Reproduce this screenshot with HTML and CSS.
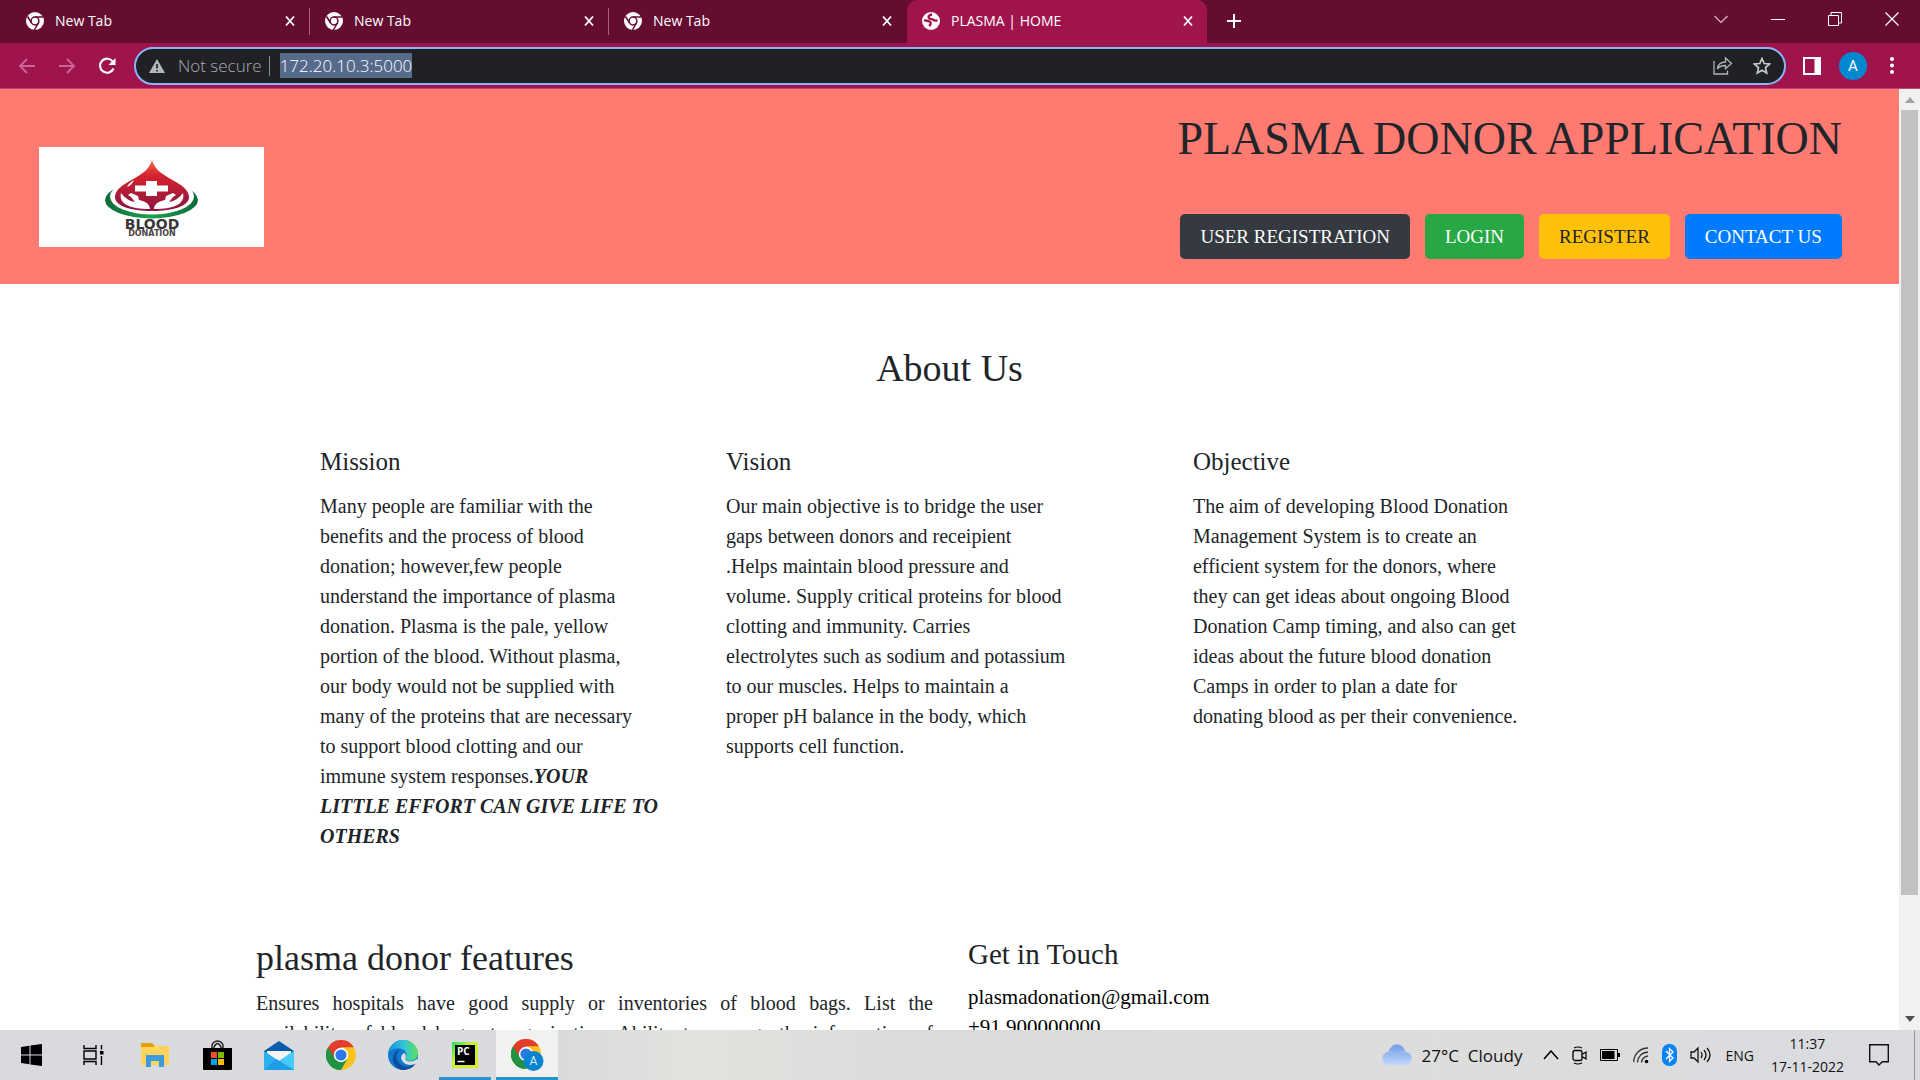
FILE: index.html
```html
<!DOCTYPE html>
<html lang="en">
<head>
<meta charset="utf-8">
<title>PLASMA | HOME</title>
<link rel="stylesheet" href="styles.css">
</head>
<body>
<svg class="defs" width="0" height="0" aria-hidden="true">
  <defs>
    <linearGradient id="drop" x1="0" y1="0" x2="0" y2="1"><stop offset="0" stop-color="#f26a4b"/><stop offset=".3" stop-color="#d6232f"/><stop offset="1" stop-color="#8a1440"/></linearGradient>
    <linearGradient id="green" x1="0" y1="0" x2="1" y2="0"><stop offset="0" stop-color="#0c6b3a"/><stop offset=".5" stop-color="#1da04c"/><stop offset="1" stop-color="#0c6b3a"/></linearGradient>
    <linearGradient id="cloud" x1="0" y1="0" x2="0" y2="1"><stop offset="0" stop-color="#6f9be8"/><stop offset="1" stop-color="#c3d8fb"/></linearGradient>
    <linearGradient id="edge-top" x1="0" y1="0" x2="1" y2="0"><stop offset="0" stop-color="#1b8fdc"/><stop offset=".5" stop-color="#2fc3dc"/><stop offset="1" stop-color="#5fe05c"/></linearGradient>
    <linearGradient id="pc" x1="0" y1="0" x2="1" y2="1"><stop offset="0" stop-color="#21e05a"/><stop offset=".4" stop-color="#c8f03a"/><stop offset="1" stop-color="#e0e82a"/></linearGradient>
    <symbol id="chrome-mono" viewBox="0 0 18 18">
      <circle cx="9" cy="9" r="9" fill="#fff"/>
      <circle cx="9" cy="9" r="3.9" fill="none" stroke="#640d31" stroke-width="1.5"/>
      <path d="M9 5h8M5.600 11L1.500 4.500M12.400 11L8.400 18" stroke="#640d31" stroke-width="1.500" fill="none"/>
    </symbol>
    <symbol id="chrome" viewBox="0 0 30 30">
      <circle cx="15" cy="15" r="15" fill="#fcc31e"/>
      <path d="M15 15L2 7.500A15 15 0 0 1 28 7.500H15z" fill="#e33b2e"/>
      <path d="M2 7.500A15 15 0 0 0 15 30l6.500-11.200L15 15z" fill="#229342"/>
      <path d="M15 7.500h13l-6.500 11.200z" fill="#fcc31e"/>
      <path d="M15 7.500a7.500 7.500 0 0 0-6.500 11.200L2 7.500z" fill="#e33b2e"/>
      <path d="M2 7.500l6.500 11.200L15 22v8A15 15 0 0 1 2 7.500z" fill="#229342"/>
      <circle cx="15" cy="15" r="7.200" fill="#fff"/><circle cx="15" cy="15" r="5.600" fill="#2f78ea"/>
    </symbol>
    <symbol id="x" viewBox="0 0 12 12"><path d="M2 1.500l8 9M10 1.500l-8 9" stroke="#fff" stroke-width="1.800"/></symbol>
  </defs>
</svg>

<div class="window">
  <div class="tabstrip">
    <div class="tab"><svg width="18" height="18"><use href="#chrome-mono"/></svg><span>New Tab</span><button aria-label="Close tab"><svg width="12" height="12"><use href="#x"/></svg></button></div>
    <div class="tab"><svg width="18" height="18"><use href="#chrome-mono"/></svg><span>New Tab</span><button aria-label="Close tab"><svg width="12" height="12"><use href="#x"/></svg></button></div>
    <div class="tab last"><svg width="18" height="18"><use href="#chrome-mono"/></svg><span>New Tab</span><button aria-label="Close tab"><svg width="12" height="12"><use href="#x"/></svg></button></div>
    <div class="tab active"><svg width="18" height="18" viewBox="0 0 18 18"><circle cx="9" cy="9" r="9" fill="#fff"/><path d="M10 2.500C7 3 5.500 5 7.500 6.500c1.500 1 3 0 4 1.500 1 .8 2.500.5 4 .5M2 8c2 1 4 .5 5.500 1.500 2 1.500 1.500 3-.5 4.500" fill="none" stroke="#a0144e" stroke-width="2.300"/></svg><span>PLASMA | HOME</span><button aria-label="Close tab"><svg width="12" height="12"><use href="#x"/></svg></button></div>
    <button class="new-tab" aria-label="New tab"><svg width="16" height="16" viewBox="0 0 16 16"><path d="M8 1v14M1 8h14" stroke="#fff" stroke-width="2"/></svg></button>
    <div class="controls">
      <button aria-label="Search tabs"><svg width="14" height="14" viewBox="0 0 14 14"><path d="M.5 4L7 10.500 13.500 4" fill="none" stroke="#d9b9c8" stroke-width="1.200"/></svg></button>
      <button aria-label="Minimize"><svg width="14" height="14" viewBox="0 0 14 14"><path d="M0 7.500h14" stroke="#fff"/></svg></button>
      <button aria-label="Restore"><svg width="14" height="14" viewBox="0 0 14 14"><path d="M.5 3.500h10v10H.5zM3 3V.500h10.500v10.500H11" fill="none" stroke="#fff"/></svg></button>
      <button aria-label="Close"><svg width="14" height="14" viewBox="0 0 14 14"><path d="M.5.500l13 13M13.500.500l-13 13" stroke="#fff" stroke-width="1.200"/></svg></button>
    </div>
  </div>

  <div class="toolbar">
    <button class="nav" aria-label="Back"><svg width="18" height="18" viewBox="0 0 18 18"><path d="M17 9H2M9 2L2 9l7 7" fill="none" stroke="#c8669a" stroke-width="1.800"/></svg></button>
    <button class="nav" aria-label="Forward"><svg width="18" height="18" viewBox="0 0 18 18"><path d="M1 9h15M9 2l7 7-7 7" fill="none" stroke="#c8669a" stroke-width="1.800"/></svg></button>
    <button class="nav" aria-label="Reload"><svg width="18" height="18" viewBox="0 0 18 18"><path d="M15.500 11.500A7 7 0 1 1 15 5" fill="none" stroke="#fff" stroke-width="2.200"/><path d="M17.500 1v7H10.500z" fill="#fff"/></svg></button>
    <div class="omnibox">
      <svg width="16" height="14" viewBox="0 0 16 14"><path d="M8 0l8 14H0z" fill="#b5b8bb"/><path d="M8 5v4.500M8 11v1.500" stroke="#202124" stroke-width="1.600"/></svg>
      <span class="insecure">Not secure</span>
      <span class="bar"></span>
      <span class="url">172.20.10.3:5000</span>
      <span class="omni-icons">
        <svg width="20" height="19" viewBox="0 0 20 19"><path d="M1 5v13h13.500v-3.500M4.500 13c.5-5 3-7 8-7V2l6 5.500-6 5V9.500c-4 0-6.500 1-8 3.500z" fill="none" stroke="#b0b3b6" stroke-width="1.300"/></svg>
        <svg width="18" height="18" viewBox="0 0 18 18"><path d="M9 1.500l2.200 5 5.400.5-4.100 3.600 1.200 5.400L9 13.200 4.300 16l1.200-5.400L1.400 7l5.400-.5z" fill="none" stroke="#c6c9cb" stroke-width="1.700"/></svg>
      </span>
    </div>
    <svg class="panel" width="18" height="18" viewBox="0 0 18 18"><path d="M1 1h16v16H1z" fill="none" stroke="#fff" stroke-width="2"/><path d="M11.500 1H17v16h-5.500z" fill="#fff"/></svg>
    <span class="avatar">A</span>
    <svg class="dots" width="4" height="17" viewBox="0 0 4 17"><g fill="#fff"><circle cx="2" cy="2" r="2"/><circle cx="2" cy="8.500" r="2"/><circle cx="2" cy="15" r="2"/></g></svg>
  </div>

  <div class="viewport">
    <div class="page">
      <header class="site-header">
        <svg class="logo" width="225" height="100" viewBox="0 0 225 100">
          <path fill="#fff" d="M0 0h225v100H0z"/>
          <ellipse cx="112.500" cy="53" rx="46.500" ry="18.500" fill="url(#green)"/>
          <ellipse cx="113" cy="49.500" rx="42" ry="18" fill="#fff"/>
          <path d="M113 13c3 11 12 15 24 22 9 5 13 10 13 15 0 9-16 14-37 14s-37-5-37-14c0-5 4-10 13-15 12-7 21-11 24-22z" fill="url(#drop)"/>
          <path d="M107 34h11v4.500h11v6h-11V49h-11v-4.500H96v-6h11z" fill="#fff"/>
          <path d="M95 33c-4 2-6 5-7 7 3-1 6-4 7-7z" fill="#fff"/>
          <path d="M82 46c4 5 8 8 14 9l-4-5-3-2 3-2 7 3 1 4c6 1 11 4 11 9-10 0-19-1-25-5-4-3-5-7-4-11z" fill="#fff"/>
          <path d="M144 46c-4 5-8 8-14 9l4-5 3-2-3-2-7 3-1 4c-6 1-11 4-11 9 10 0 19-1 25-5 4-3 5-7 4-11z" fill="#fff"/>
          <text x="113" y="82" text-anchor="middle" class="logo-a">BLOOD</text>
          <text x="113" y="89" text-anchor="middle" class="logo-b">DONATION</text>
        </svg>
        <div class="head-right">
          <h1>PLASMA DONOR APPLICATION</h1>
          <nav>
            <a class="btn dark" href="#">USER REGISTRATION</a>
            <a class="btn green" href="#">LOGIN</a>
            <a class="btn yellow" href="#">REGISTER</a>
            <a class="btn blue" href="#">CONTACT US</a>
          </nav>
        </div>
      </header>

      <h2 class="about-title">About Us</h2>
      <section class="about">
        <article>
          <h3>Mission</h3>
          <p>Many people are familiar with the<br>benefits and the process of blood<br>donation; however,few people<br>understand the importance of plasma<br>donation. Plasma is the pale, yellow<br>portion of the blood. Without plasma,<br>our body would not be supplied with<br>many of the proteins that are necessary<br>to support blood clotting and our<br>immune system responses.<b><i>YOUR<br>LITTLE EFFORT CAN GIVE LIFE TO<br>OTHERS</i></b></p>
        </article>
        <article>
          <h3>Vision</h3>
          <p>Our main objective is to bridge the user<br>gaps between donors and receipient<br>.Helps maintain blood pressure and<br>volume. Supply critical proteins for blood<br>clotting and immunity. Carries<br>electrolytes such as sodium and potassium<br>to our muscles. Helps to maintain a<br>proper pH balance in the body, which<br>supports cell function.</p>
        </article>
        <article>
          <h3>Objective</h3>
          <p>The aim of developing Blood Donation<br>Management System is to create an<br>efficient system for the donors, where<br>they can get ideas about ongoing Blood<br>Donation Camp timing, and also can get<br>ideas about the future blood donation<br>Camps in order to plan a date for<br>donating blood as per their convenience.</p>
        </article>
      </section>

      <section class="bottom">
        <div class="features">
          <h2>plasma donor features</h2>
          <p>Ensures hospitals have good supply or inventories of blood bags. List the<br>availability of blood bags at organization. Ability to manage the information of</p>
        </div>
        <address class="contact">
          <h2>Get in Touch</h2>
          <a href="mailto:plasmadonation@gmail.com">plasmadonation@gmail.com</a>
          <a href="tel:+91900000000">+91 900000000</a>
        </address>
      </section>
    </div>
    <div class="scrollbar">
      <svg width="10" height="6" viewBox="0 0 10 6"><path d="M0 6l5-6 5 6z" fill="#a3a3a3"/></svg>
      <div class="track"><div class="thumb"></div></div>
      <svg width="10" height="6" viewBox="0 0 10 6"><path d="M0 0l5 6 5-6z" fill="#505050"/></svg>
    </div>
  </div>

  <div class="taskbar">
    <button class="task" aria-label="Start"><svg width="21" height="22" viewBox="0 0 21 22"><path d="M0 3l8.500-1.200v8.700H0zM9.500 1.600L21 0v10.500H9.500zM0 11.500h8.500v8.700L0 19zM9.500 11.500H21V22L9.500 20.400z"/></svg></button>
    <button class="task" aria-label="Task view"><svg width="21" height="20" viewBox="0 0 21 20"><path d="M1 0v3.500h12V0M1 6h12v8H1zM1 20v-3.500h12V20M18.500 0v4.500M18.500 11v9" fill="none" stroke="#000" stroke-width="1.400"/><path d="M17 6h3.500v3.500H17z"/></svg></button>
    <button class="task" aria-label="File Explorer"><svg width="28" height="24" viewBox="0 0 28 24"><path d="M0 0h11l3 3v4H0z" fill="#e5a100"/><path d="M0 4h12l2-1h14v19H0z" fill="#ffd35c"/><path d="M5 24V12h18v12h-5v-6h-8v6z" fill="#3d9bdc"/></svg></button>
    <button class="task" aria-label="Store"><svg width="29" height="30" viewBox="0 0 29 30"><path d="M9 9V6a5.500 5 0 0 1 11 0v3M11 9V7q3.500-7 7 0v2" fill="none" stroke="#222" stroke-width="1.500"/><path d="M0 8h29v21q0 1-1 1H1q-1 0-1-1z"/><path d="M8 12h6v6H8z" fill="#f25022"/><path d="M15 12h6v6h-6z" fill="#7fba00"/><path d="M8 19h6v6H8z" fill="#00a4ef"/><path d="M15 19h6v6h-6z" fill="#ffb900"/></svg></button>
    <button class="task" aria-label="Mail"><svg width="30" height="29" viewBox="0 0 30 29"><path d="M0 10L15 0l15 10v7H0z" fill="#0a5cad"/><path d="M3 10h24v8l-12 3-12-3z" fill="#f5f5f5"/><path d="M0 10l15 10 15-10v19H0z" fill="#2bb1ee"/><path d="M12 18l3 2 15-10v19z" fill="#46cbf8"/><path d="M0 29h30L12 18z" fill="#1f9de6"/></svg></button>
    <button class="task" aria-label="Chrome"><svg width="30" height="30"><use href="#chrome"/></svg></button>
    <button class="task" aria-label="Edge"><svg width="30" height="30" viewBox="0 0 30 30"><circle cx="15" cy="15" r="15" fill="#1278cf"/><path d="M0 14C1 5 8 0 15 0c9 0 15 6.500 15 13 0 5-4 8-8 8-3.500 0-5-1.500-4.500-3 2-3 1-9-5.500-9.500C6 8 1 10 0 14z" fill="url(#edge-top)"/><path d="M12 9c-4 4-5 10-1 14 4 4 11 5 17 0-3 5-8 7-13 7C8 29 5 24 5 19c0-5 3-9 7-10z" fill="#0d4f9b"/><path d="M17.500 18c-.5 2 1 3.500 4.500 3.500 2.500 0 5-.8 6.500-2.500l1.500 2-2 2.500c-6 3-12 1-14-3-2-3.500 0-6.500 2.500-7.500 1.500 1.500 1.500 4 1 5z" fill="#dcdee0"/></svg></button>
    <button class="task open" aria-label="PyCharm"><svg width="26" height="26" viewBox="0 0 26 26"><path d="M0 0h26v26H0z" fill="url(#pc)"/><path d="M3 3h20v20H3z"/><text x="5" y="13" class="pc-text">PC</text><path d="M5.500 19.500h7" stroke="#fff" stroke-width="1.500"/></svg></button>
    <button class="task open current" aria-label="Chrome profile A"><svg width="33" height="32" viewBox="0 0 33 32"><use href="#chrome" width="30" height="30"/><circle cx="22.500" cy="22" r="10" fill="#0a84d0"/><text x="22.500" y="26" text-anchor="middle" class="badge-text">A</text></svg></button>

    <div class="tray">
      <svg width="30" height="22" viewBox="0 0 30 22"><path d="M7 21a6.500 6.500 0 0 1-.5-13C8 3 11 .500 15 .500S22 3 23.500 8A6.500 6.500 0 0 1 23 21z" fill="url(#cloud)"/><path d="M6.500 8c3 0 5 1.500 6 3.500M23.500 8c-3-.5-6 1-7 3" fill="none" stroke="#a9c4f5"/></svg>
      <span class="weather">27°C&nbsp; Cloudy</span>
      <svg class="chev" width="16" height="10" viewBox="0 0 16 10"><path d="M1 9l7-8 7 8" fill="none" stroke="#000" stroke-width="1.500"/></svg>
      <svg width="15" height="19" viewBox="0 0 15 19"><rect x="1" y="4.500" width="9" height="10" rx="2" fill="none" stroke="#000" stroke-width="1.300"/><path d="M10 8.500l4-2.500v7l-4-2.500M2 2q4-2 8 0M2 17q4 2 8 0" fill="none" stroke="#000" stroke-width="1.200"/></svg>
      <svg width="20" height="12" viewBox="0 0 20 12"><path d="M.5.500h17v11H.5z" fill="none" stroke="#000"/><path d="M2 2h12.500v8H2zM18 4h2v4h-2z"/></svg>
      <svg width="16" height="17" viewBox="0 0 16 17"><path d="M.7 15C1 7 7 1 15 1M4.500 15.500C5 9.500 9 5.500 15 5M8.500 15.500C9 12 11 9.500 15 9" fill="none" stroke="#333" stroke-width="1.300"/><circle cx="13.500" cy="14.500" r="1.800"/></svg>
      <svg width="15" height="22" viewBox="0 0 15 22"><rect width="15" height="22" rx="7" fill="#0a84f5"/><path d="M4 7l7 7-3.500 3.500v-13L11 8l-7 7" fill="none" stroke="#fff" stroke-width="1.300"/></svg>
      <svg width="22" height="18" viewBox="0 0 22 18"><path d="M1 6h3l4-4v14l-4-4H1zM11 6q2 3 0 6M14 4q4 5 0 10M17 2q6 7 0 14" fill="none" stroke="#111" stroke-width="1.300"/></svg>
      <span class="lang">ENG</span>
      <span class="clock">11:37<br>17-11-2022</span>
      <svg class="note" width="20" height="22" viewBox="0 0 20 22"><path d="M.7.700h18.600v17h-6L10 21l-3-3.300H.7z" fill="none" stroke="#111" stroke-width="1.400"/></svg>
      <span class="peek"></span>
    </div>
  </div>
</div>
</body>
</html>
```
FILE: styles.css
```css
* { box-sizing: border-box; }
body { margin: 0; }
.defs { position: absolute; }
button { border: 0; padding: 0; background: none; font: inherit; display: flex; align-items: center; justify-content: center; }
h1, h2, h3, p { margin: 0; font-weight: 400; }

.window { height: 100vh; display: flex; flex-direction: column; overflow: hidden; font-family: "Open Sans", "Noto Sans", sans-serif; }

/* Browser tabs */
.tabstrip { flex: none; height: 43px; display: flex; background: #640d31; color: #fff; padding-left: 11px; font-size: 14px; }
.tab { width: 299px; display: flex; align-items: center; padding: 0 13px 2px 15px; border-right: 1px solid transparent; border-image: linear-gradient(transparent 20%, #a0627e 20%, #a0627e 80%, transparent 80%) 1; }
.tab span { margin-left: 11px; flex: 1; }
.tab.last { border-image: none; width: 298px; }
.tab.active { border-image: none; border: 0; width: 300px; background: #a0144e; border-radius: 10px 10px 0 0; }
.new-tab { width: 54px; padding-bottom: 2px; }
.controls { margin-left: auto; display: flex; padding-bottom: 6px; }
.controls button { width: 57px; }

/* Browser toolbar */
.toolbar { flex: none; height: 46px; display: flex; align-items: center; background: #a0144e; border-bottom: 1px solid #b8487a; padding: 0 26px 0 7px; }
.nav { width: 40px; height: 36px; }
.omnibox { flex: 1; height: 38px; margin-left: 7px; border: 2px solid #8ab4f8; border-radius: 19px; background: #202124; display: flex; align-items: center; padding: 0 13px; font-size: 17px; font-weight: 300; }
.insecure { color: #a8abae; margin-left: 13px; }
.bar { width: 1px; height: 20px; background: #8b8e91; margin: 0 10px 0 7px; }
.url { color: #fff; background: #566a8c; line-height: 25px; }
.omni-icons { margin-left: auto; display: flex; align-items: center; gap: 20px; }
.panel { margin-left: 17px; }
.avatar { width: 28px; height: 28px; border-radius: 50%; background: #0288d1; color: #fff; font: 15px/28px Roboto, sans-serif; text-align: center; margin: 0 23px 0 18px; }

/* Web page */
.viewport { flex: 1; min-height: 0; display: flex; overflow: hidden; background: #fff; }
.page { flex: 1; min-width: 0; font-family: "Liberation Serif", serif; color: #212529; white-space: nowrap; }
.site-header { background: #ff7b72; display: flex; justify-content: space-between; align-items: flex-start; padding: 21px 57px 25px 39px; }
.logo { margin-top: 37px; }
.logo-a { font: bold 14px "DejaVu Sans", sans-serif; fill: #3a3638; }
.logo-b { font: bold 8px "DejaVu Sans", sans-serif; fill: #4a4648; }
h1 { font-size: 46px; line-height: 58px; }
.site-header nav { display: flex; gap: 15px; margin: 46px 0 0 3px; }
.btn { font-size: 19px; line-height: 45px; padding: 0 20px; border-radius: 5px; color: #fff; text-decoration: none; }
.dark { background: #343a40; }
.green { background: #28a745; }
.yellow { background: #ffc107; color: #212529; }
.blue { background: #007bff; }
.about-title { font-size: 38px; line-height: 46px; text-align: center; margin: 61px 0 56px; }
.about { display: grid; grid-template-columns: 406fr 467fr 706fr; padding-left: 16.85%; }
.about article { min-width: 0; }
h3 { font-size: 25px; line-height: 30px; margin-bottom: 14px; }
p { font-size: 20px; line-height: 30px; }
.bottom { display: grid; grid-template-columns: 677fr 931fr; column-gap: 35px; padding-left: 13.48%; margin-top: 85px; }
.features, .contact { min-width: 0; }
.features h2 { font-size: 36px; line-height: 44px; margin-bottom: 8px; }
.features p { text-align: justify; text-align-last: justify; white-space: normal; }
.contact { font-size: 21px; line-height: 30px; font-style: normal; }
.contact h2 { font-size: 29px; line-height: 36px; margin-bottom: 10px; }
.contact a { display: block; color: #000; text-decoration: none; }

.scrollbar { width: 21px; flex: none; background: #f1f1f1; display: flex; flex-direction: column; align-items: center; padding: 8px 0; }
.track { flex: 1; align-self: stretch; padding: 7px 2px; }
.thumb { height: 87.3%; background: #c1c1c1; }

/* Taskbar */
.taskbar { flex: none; height: 50px; display: flex; background: linear-gradient(90deg, #d8dadd, #d9dbdd 30%, #e3e2de 36%, #dadbdc 48%, #dddddd 75%, #d9dbdf); }
.task { width: 62px; border-bottom: 3px solid transparent; border-top: 3px solid transparent; }
.open { border-bottom-color: #2a93d0; width: 52px; margin: 0 5px; }
.current { width: 62px; margin: 0; background: #f1f1f1; border-top-color: #f1f1f1; }
.pc-text { font: bold 10px "Open Sans", sans-serif; fill: #fff; }
.badge-text { font: 12px Roboto, sans-serif; fill: #d8ecf8; }
.tray { margin-left: auto; display: flex; align-items: center; gap: 13px; color: #111; }
.weather { font-size: 17px; margin: 0 8px 0 -3px; }
.lang { font-size: 14px; }
.clock { font-size: 14px; line-height: 23px; text-align: center; margin-left: 4px; }
.note { margin: 0 12px 0 12px; }
.peek { width: 6px; align-self: stretch; border-left: 1px solid #999; }
```
